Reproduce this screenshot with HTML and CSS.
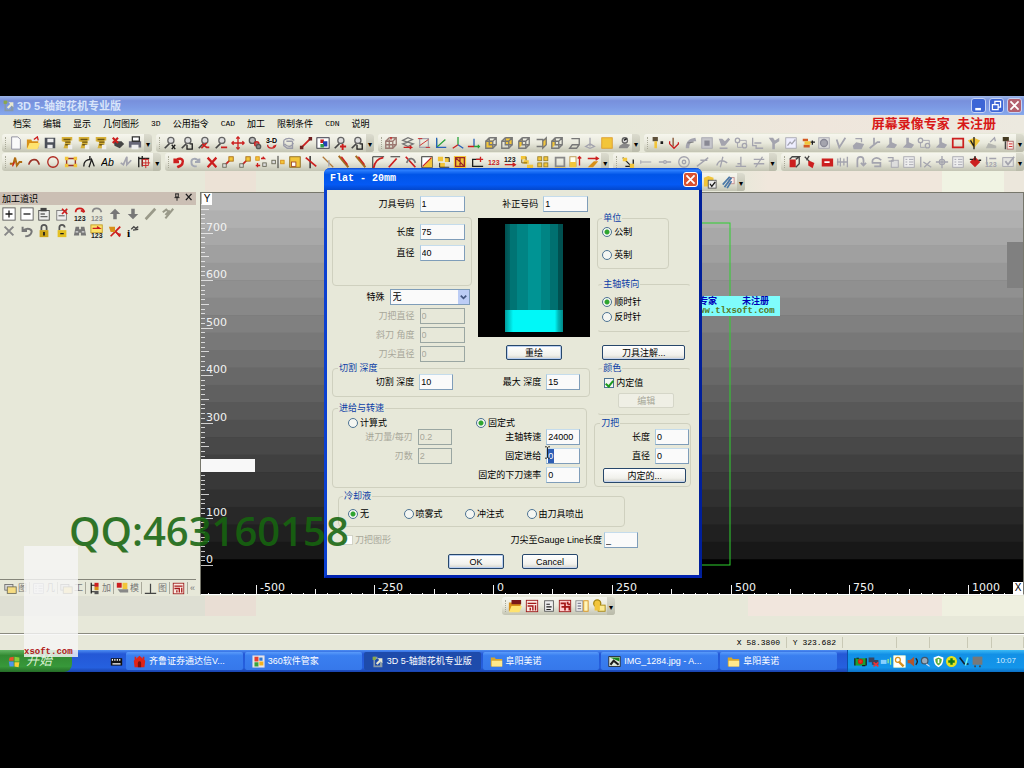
FILE: index.html
```html
<!DOCTYPE html>
<html lang="zh-CN">
<head>
<meta charset="utf-8">
<title>3D 5-轴鉋花机专业版</title>
<link rel="stylesheet" href="styles.css">
</head>
<body>
<main class="desktop">
  <header class="titlebar">
    <i data-icon="app"></i><h1>3D 5-轴鉋花机专业版</h1>
    <div class="winbtns">
      <button class="winbtn" aria-label="最小化"><i data-icon="min"></i></button>
      <button class="winbtn" aria-label="还原"><i data-icon="restore"></i></button>
      <button class="winbtn winbtn-close" aria-label="关闭"><i data-icon="close"></i></button>
    </div>
  </header>
  <nav class="menubar">
    <button>档案</button><button>编辑</button><button>显示</button><button>几何图形</button><button class="latin">3D</button><button>公用指令</button><button class="latin">CAD</button><button>加工</button><button>限制条件</button><button class="latin">CDN</button><button>说明</button>
    <strong class="notice">屏幕录像专家&nbsp; 未注册</strong>
  </nav>
  <div class="toolrow toolrow-1">
    <div class="bar" data-icons="new open save nc nc nc kill print"></div>
    <div class="bar" data-icons="zoomx zoombox zoomred zoomout pan balls rot3d spin diag image zoomin zoombox"></div>
    <div class="bar" data-icons="cube layers frame axes axes2 axes3 box1 box2 box3 box4 box3 box5 axisg yellow solid"></div>
    <div class="bar" data-icons="drill down surf shade cup glink gstep gflag gchart stack globe vee gmesh gpin gshoe gshoe glink gshoe redbox gem gslope calc"></div>
  </div>
  <div class="toolrow toolrow-2">
    <div class="bar" data-icons="wave arc circle rect node text gwave grid"></div>
    <div class="bar" data-icons="undo redo cross move1 move1 move2 mirror scale trim1 trim2 trim3 trim3 fillet fillet2 trim4 half group group2 corner n123a n123 chain four square raise offset"></div>
    <div class="bar" data-icons="snap gline gmid gcirc gtan gtan2 gperp gneq"></div>
    <div class="bar" data-icons="redcube redtool redslot gbars gloop gturn gcopy glist gx gcross glist diamond g123 gcheck"></div>
  </div>
  <div class="toolrow toolrow-3">
    <div class="bar bar-edit" data-icons="dbcheck attach"></div>
  </div>
  <div class="work">
    <aside class="side">
      <header class="side-head"><h2>加工道识</h2><button aria-label="固定"><i data-icon="pin"></i></button><button aria-label="关闭面板"><i data-icon="xsmall"></i></button></header>
      <div class="side-tools" data-icons="plus minus clip clipx r123 g123r up downg brush brush2 gdel gundo lock unlock bino y123 tools info"></div>
      <div class="side-tabs">
        <button><i data-icon="stackw"></i>图</button><button><i data-icon="glist"></i>几</button><button><i data-icon="stackw"></i>工</button><button><i data-icon="tree"></i>加</button><button><i data-icon="calc2"></i>模</button><button><i data-icon="perp"></i>图</button><button aria-label="宏"><i data-icon="maze"></i></button><button aria-label="更多">«</button>
      </div>
    </aside>
    <section class="view" id="view">
      <span class="axis axis-y">Y</span><span class="axis axis-x">X</span>
      <span class="patch"></span><span class="scrollpatch"></span>
      <p class="banner"><b>专家 &nbsp; &nbsp; &nbsp; &nbsp; &nbsp;未注册</b><span>ww.tlxsoft.com</span></p>
    </section>
  </div>
  <div class="lower"><div class="bar bar-lower" data-icons="openred maze doc maze2 table stacky"></div></div>
  <footer class="status"><span class="pos">X 58.3800</span><span class="pos">Y 323.682</span><span></span><span></span><span></span><span></span><span></span></footer>
  <footer class="taskbar">
    <button class="start"><i data-icon="windows"></i>开始</button>
    <div class="quick"><i data-icon="movie"></i></div>
    <div class="tasks">
      <button><i data-icon="house"></i>齐鲁证券通达信V...</button>
      <button><i data-icon="soft"></i>360软件管家</button>
      <button class="on"><i data-icon="app"></i>3D 5-轴鉋花机专业版</button>
      <button><i data-icon="folder"></i>阜阳美诺</button>
      <button><i data-icon="photo"></i>IMG_1284.jpg - A...</button>
      <button><i data-icon="folder"></i>阜阳美诺</button>
    </div>
    <div class="tray"><i data-icon="t1"></i><i data-icon="t2"></i><i data-icon="t3"></i><i data-icon="t4"></i><i data-icon="t5"></i><i data-icon="t6"></i><i data-icon="t7"></i><i data-icon="t8"></i><i data-icon="t9"></i><i data-icon="t10"></i><time>10:07</time></div>
  </footer>

  <section class="dialog" role="dialog" aria-labelledby="dlg-title">
    <header class="dialog-head"><h2 id="dlg-title">Flat - 20mm</h2><button class="winbtn dialog-close" aria-label="关闭"><i data-icon="close"></i></button></header>
    <form class="dialog-body">
      <div class="columns">
        <div class="left">
          <div class="top">
            <div class="stack">
              <div class="field"><label for="no">刀具号码</label><input id="no" value="1"></div>
              <fieldset class="plain stack">
                <div class="field"><label for="len">长度</label><input id="len" value="75"></div>
                <div class="field"><label for="dia">直径</label><input id="dia" value="40"></div>
              </fieldset>
              <div class="field field-select"><label for="sp">特殊</label><span class="select"><select id="sp"><option>无</option></select><i data-icon="chev"></i></span></div>
              <div class="field off"><label for="a1">刀把直径</label><input id="a1" value="0" disabled></div>
              <div class="field off"><label for="a2">斜刀 角度</label><input id="a2" value="0" disabled></div>
              <div class="field off"><label for="a3">刀尖直径</label><input id="a3" value="0" disabled></div>
            </div>
            <div class="preview-col">
              <div class="field field-comp"><label for="comp">补正号码</label><input id="comp" value="1"></div>
              <div class="preview"><div class="shank"></div><div class="blade"></div></div>
              <button type="button" class="btn btn-default">重绘</button>
            </div>
          </div>
          <fieldset class="depth">
            <legend>切割 深度</legend>
            <div class="pair">
              <div class="field"><label for="cut">切割 深度</label><input id="cut" value="10"></div>
              <div class="field"><label for="max">最大 深度</label><input id="max" value="15"></div>
            </div>
          </fieldset>
          <fieldset class="feed">
            <legend>进给与转速</legend>
            <div class="modes">
              <label class="opt"><input type="radio" name="mode">计算式</label>
              <label class="opt"><input type="radio" name="mode" checked>固定式</label>
            </div>
            <div class="pair">
              <div class="field off"><label for="f1">进刀量/每刃</label><input id="f1" value="0.2" disabled></div>
              <div class="field"><label for="f2">主轴转速</label><input id="f2" value="24000"></div>
              <div class="field off"><label for="f3">刃数</label><input id="f3" value="2" disabled></div>
              <div class="field"><label for="f4">固定进给</label><input id="f4" class="selected" value="0"></div>
              <span></span>
              <div class="field"><label for="f5">固定的下刀速率</label><input id="f5" value="0"></div>
            </div>
          </fieldset>
        </div>
        <div class="right">
          <fieldset class="unit"><legend>单位</legend>
            <label class="opt"><input type="radio" name="unit" checked>公制</label>
            <label class="opt"><input type="radio" name="unit">英制</label>
          </fieldset>
          <fieldset class="open spindle"><legend>主轴转向</legend>
            <label class="opt"><input type="radio" name="dir" checked>顺时针</label>
            <label class="opt"><input type="radio" name="dir">反时针</label>
          </fieldset>
          <button type="button" class="btn btn-note">刀具注解...</button>
          <fieldset class="open color"><legend>颜色</legend>
            <label class="opt"><input type="checkbox" checked>内定值</label>
            <button type="button" class="btn" disabled>编辑</button>
          </fieldset>
          <fieldset class="shaft"><legend>刀把</legend>
            <div class="field"><label for="s1">长度</label><input id="s1" value="0"></div>
            <div class="field"><label for="s2">直径</label><input id="s2" value="0"></div>
            <button type="button" class="btn">内定的...</button>
          </fieldset>
        </div>
      </div>
      <fieldset class="coolant"><legend>冷却液</legend>
        <label class="opt"><input type="radio" name="cool" checked>无</label>
        <label class="opt"><input type="radio" name="cool">喷雾式</label>
        <label class="opt"><input type="radio" name="cool">冲注式</label>
        <label class="opt"><input type="radio" name="cool">由刀具喷出</label>
      </fieldset>
      <div class="gauge">
        <label class="opt off"><input type="checkbox" disabled>刀把图形</label>
        <div class="field"><label for="g">刀尖至Gauge Line长度</label><input id="g" value="_"></div>
      </div>
      <div class="actions"><button type="button" class="btn btn-default">OK</button><button type="button" class="btn">Cancel</button></div>
    </form>
    <i class="ibeam" data-icon="ibeam"></i>
  </section>
  <div class="ghost"><span>xsoft.com</span></div>
  <p class="watermark">QQ:463160158</p>
</main>
<script src="script.js"></script>
</body>
</html>
```

FILE: styles.css
```css
* { box-sizing: border-box; }
body {
  margin: 0; min-height: 100vh; background: #000; color: #000;
  display: flex; align-items: center;
  font: 9px/12px "Liberation Sans", "Noto Sans CJK SC", sans-serif;
}
h1, h2, p { margin: 0; font-size: inherit; font-weight: inherit; }
button { font: inherit; color: inherit; background: none; border: 0; padding: 0; white-space: nowrap; }
i { display: inline-flex; flex: none; font-style: normal; }
i svg { display: block; width: 13px; height: 13px; }

.desktop { position: relative; width: 100%; height: 75vh; display: flex; flex-direction: column; background: #e7e8d9; overflow: hidden; }
.desktop > * { flex: none; }

.titlebar { height: 19px; display: flex; align-items: center; gap: 2px; padding: 0 2px; background: linear-gradient(#9db6e6, #7890dc 25%, #7c9ae4 60%, #86a8ec); color: #d8e4fa; }
.titlebar h1 { font-size: 11px; font-weight: bold; }
.winbtns { margin-left: auto; display: flex; gap: 3px; }
.winbtn { width: 15px; height: 15px; border: 1px solid #c5d3f5; border-radius: 3px; background: #3d66d6; display: flex; align-items: center; justify-content: center; }
.winbtn-close { background: #b3606f; }

.menubar { height: 18px; display: flex; align-items: center; gap: 12px; padding: 0 28px 0 13px; background: linear-gradient(90deg, #e7e8d9 60%, #efe6dc 80%, #ece9df); }
.menubar .latin { font-family: "Liberation Mono", monospace; font-size: 8px; }
.notice { margin-left: auto; color: #d81818; font-size: 13px; line-height: 18px; font-weight: 700; }

.toolrow { display: grid; gap: 4px; height: 19px; padding: 0 0 0 2px; align-items: center; }
.toolrow-1 { grid-template-columns: 150fr 218fr 262fr 380fr; }
.toolrow-2 { grid-template-columns: 159fr 443fr 163fr 243fr; }
.toolrow-3 { height: 21px; grid-template-columns: 1fr; background: linear-gradient(90deg, #e7e8d9 20%, #ece2d6 20% 25%, #e7e8d9 25% 72%, #f0e7dc 75% 92%, #f0f3e3 92% 98%, #ece7dc 98%); padding-left: 696px; }
.bar { height: 18px; display: flex; align-items: center; padding-left: 6px; border-radius: 3px; background: linear-gradient(#f6f6ee, #e9e9dc 50%, #c3c4b3); min-width: 0; overflow: hidden; }
.bar::before { content: ""; width: 1px; height: 12px; border-left: 1px dotted #a9a998; margin-left: -3px; }
.bar::after { content: "▾"; width: 8px; align-self: stretch; padding-top: 5px; background: linear-gradient(#dcdccf, #b9baa9); font: 8px/12px "DejaVu Sans", sans-serif; text-align: center; }
.bar button { flex: 1; min-width: 0; display: flex; justify-content: center; }
.bar button svg, .side-tools svg { width: 14px; height: 14px; }
.bar-edit { width: 49px; }
.bar-lower { width: 113px; }

.work { flex: 1 1 0; min-height: 0; display: flex; gap: 4px; }
.side { width: 196px; display: flex; flex-direction: column; }
.side-head { height: 13px; display: flex; align-items: center; gap: 2px; padding: 0 2px; background: #cbbfb4; }
.side-head h2 { flex: 1; }
.side-head i svg { width: 10px; height: 10px; }
.side-tools { padding: 0 19px 0 0; display: grid; grid-template-columns: repeat(10, 1fr); grid-auto-rows: 17px; }
.side-tools button { display: flex; align-items: center; justify-content: center; }
.side-tabs { margin-top: auto; height: 17px; display: flex; gap: 2px; padding-left: 4px; border-top: 1px solid #85857a; color: #777; }
.side-tabs button { display: flex; align-items: center; gap: 1px; padding-right: 2px; border-right: 1px solid #aaa99b; height: 12px; margin-top: 2px; }
.side-tabs button:last-child { border: 0; }

.view { position: relative; flex: 1; margin-bottom: 1px; border: 1px solid #77776c; border-bottom-color: #fff; overflow: hidden; background: #000; }
.view svg { display: block; width: 100%; height: 100%; }
.ruler { font: 11px "DejaVu Sans", sans-serif; fill: #f2f2f2; }
.axis { position: absolute; background: #fff; width: 10px; height: 12px; text-align: center; font-size: 10px; }
.axis-y { left: 1px; top: 0; }
.axis-x { right: 0; bottom: 0; }
.patch { position: absolute; left: 0; bottom: 122px; width: 54px; height: 13px; background: #f8f8f8; }
.scrollpatch { position: absolute; right: 0; top: 49px; width: 16px; height: 46px; background: #808080; }
.banner { position: absolute; left: 480px; top: 103px; width: 99px; padding-left: 18px; background: #7ffcfc; color: #0000b8; line-height: 10px; white-space: nowrap; }
.banner b, .banner span { display: block; }
.banner span { color: #557722; font: bold 9px/10px "Liberation Mono", monospace; }

.lower { height: 38px; padding: 1px 0 0 502px; border-bottom: 1px solid #8b8b80; background: linear-gradient(90deg, #dedfd3 20%, #e9ded4 20% 25%, #e7e8d9 25% 73%, #f1e6dd 73% 92%, #eff0e0 92%) 0 0 / 100% 20px no-repeat; }
.status { height: 16px; display: grid; grid-template-columns: 787fr 56fr 54fr 33fr 38fr 24fr 32fr; border-top: 1px solid #fff; align-items: center; font: 8px/12px "Liberation Mono", monospace; white-space: nowrap; }
.status span { border-right: 1px solid #c9c9b6; height: 11px; line-height: 11px; }
.status .pos { text-align: right; padding-right: 6px; }

.taskbar { height: 22px; display: flex; color: #fff; background: linear-gradient(#4d8df2, #2458d6 18%, #2560df 80%, #1a43ac); }
.start { width: 72px; display: flex; align-items: center; gap: 5px; padding-left: 8px; border-radius: 0 8px 8px 0; background: linear-gradient(#63b563, #328a32 25%, #37983a 75%, #246a26); font-size: 13px; font-style: italic; color: #d6f0cf; }
.quick { width: 54px; display: flex; align-items: center; justify-content: flex-end; padding-right: 3px; }
.tasks { flex: 1; display: grid; grid-template-columns: repeat(6, 1fr); gap: 2px; padding: 2px 10px 2px 0; }
.tasks button { display: flex; align-items: center; gap: 3px; padding-left: 7px; border-radius: 2px; overflow: hidden; background: linear-gradient(#5a9bfa, #3a7ff0 20%, #3678ea); }
.tasks .on { background: #1e4bab; }
.tray { width: 177px; display: flex; align-items: center; padding: 0 8px 0 6px; background: linear-gradient(#3bb9f5, #1290e6 20%, #1395ea 80%, #0c6fc4); border-left: 1px solid #0b4fa8; }
.tray time { margin-left: auto; font-size: 8px; color: #d6ecff; }

.dialog { position: absolute; left: 324px; top: 72px; width: 378px; border: solid #0a3fd0; border-width: 0 3px 3px; border-right-color: #001f9a; border-bottom-color: #0022b0; border-radius: 6px 6px 0 0; background: #e7e8d9; }
.dialog-head { height: 22px; margin: 0 -3px; display: flex; align-items: center; justify-content: space-between; padding: 0 4px 0 6px; border-radius: 6px 6px 0 0; background: linear-gradient(#0a44cc, #2c80ff 10%, #0055e8 30%, #0459f4 75%, #0347cc); color: #fff; }
.dialog-head h2 { font: bold 10px/14px "Liberation Mono", monospace; }
.dialog-close { background: #d9512f; border-color: #fff; }
.dialog-body { padding: 6px 8px 6px 5px; }
.columns { display: flex; gap: 4px; }
.left { flex: 259; min-width: 0; }
.right { flex: 97; min-width: 0; padding-top: 16px; }
.top { display: grid; grid-template-columns: 140fr 113fr; gap: 6px; }
.stack { display: flex; flex-direction: column; gap: 3px; }

.field { display: flex; align-items: center; justify-content: flex-end; gap: 5px; height: 16px; padding-right: 7px; white-space: nowrap; }
.field input { width: 45px; height: 16px; padding: 0 1px; border: 1px solid #7f9db9; border-top-color: #c5dcec; border-left-color: #a9c8dd; background: #fafafa; font: inherit; color: #000; outline: 0; }
.off, .field input:disabled { color: #a7a799; }
.field input:disabled { background: #e7e8d9; border-color: #9aa6a2; }
.field .selected { background: linear-gradient(90deg, #fafafa 1px, #2d5eb5 1px 7px, #fafafa 7px); color: #fff; }
fieldset { margin: 0; min-width: 0; border: 1px solid #cfd0bf; border-radius: 4px; padding: 0; }
legend { margin-left: 5px; padding: 0 1px; color: #0b3da6; line-height: 12px; }
.plain { gap: 5px; padding: 6px 0 24px; margin: 2px 0 0; }
.plain .field { padding-right: 6px; }
.field-select { padding-right: 2px; }
.select { position: relative; width: 80px; height: 16px; }
.select select { appearance: none; width: 100%; height: 16px; border: 1px solid #7f9db9; background: #fafafa; font: inherit; color: #000; padding: 0 2px; display: block; }
.select i { position: absolute; right: 1px; top: 1px; background: #bccdf5; pointer-events: none; }
.select i svg { width: 11px; height: 14px; }
.preview-col { display: flex; flex-direction: column; align-items: center; }
.field-comp { align-self: stretch; padding-right: 2px; }
.preview { width: 100%; height: 119px; margin: 6px 0 8px; padding: 6px 27px 5px; background: #000; display: flex; flex-direction: column; }
.shank { flex: 1; background: linear-gradient(90deg, #005050, #006060 8%, #007474 8% 20%, #008484 20% 40%, #009494 40% 62%, #008484 62% 78%, #007070 78% 92%, #005050 92%); }
.blade { height: 22px; background: linear-gradient(90deg, #009c9c, #00d0d0 8%, #00f8f8 14% 86%, #00b8b8 92%, #008888); }

.btn { height: 15px; width: 56px; border: 1px solid #27476b; border-radius: 2px; background: linear-gradient(#fff, #f1f1ec 70%, #d3d2ca); box-shadow: inset 0 -1px #c5d4ee; line-height: 12px; }
.btn-default { box-shadow: inset 0 0 0 1px #b9cff1; }
.btn:disabled { color: #a7a799; border-color: #d5d6c8; background: #efefe5; box-shadow: none; }
.pair { display: grid; grid-template-columns: 127fr 131fr; row-gap: 3px; }
.pair .field input { width: 34px; }
.pair .field { padding-right: 6px; }
.depth { padding-bottom: 6px; }
.depth .field:last-child { padding-right: 9px; }
.feed { margin: 5px 3px 0 0; padding: 3px 0 4px; }
.modes { display: grid; grid-template-columns: 128px 1fr; padding-left: 15px; }
.opt { display: flex; align-items: center; gap: 2px; height: 12px; white-space: nowrap; }
.opt input { appearance: none; flex: none; width: 10px; height: 10px; margin: 0; border: 1px solid #4d7393; border-radius: 50%; background: #f4f6f2; }
.opt input[type="checkbox"] { border-radius: 0; display: flex; justify-content: center; }
.opt input[type="radio"]:checked { background: radial-gradient(circle, #2fa52f 2px, #f4f6f2 3px); }
.opt input[type="checkbox"]:checked::after { content: ""; width: 3px; height: 6px; border: solid #1d9a1d; border-width: 0 2px 2px 0; transform: rotate(40deg); }
.opt input:disabled { border-color: #d3d4c7; background: #fff; }
.right fieldset { display: block; padding-left: 7px; margin-left: 3px; }
.right legend { margin-left: 0; }
.right .unit { width: 72px; padding: 2px 0 7px 4px; }
.unit .opt + .opt { margin-top: 11px; }
.right .open { border-left-color: transparent; border-right-color: transparent; padding-left: 4px; margin-top: 9px; }
.spindle { padding: 6px 0 8px; }
.spindle .opt + .opt { margin-top: 3px; }
.btn-note { display: block; width: 83px; margin: 13px 0 0 8px; }
.right .color { margin-top: 2px; padding: 3px 0 6px 6px; }
.color legend { margin-left: -2px; }
.color .btn { display: block; margin: 4px 0 0 14px; }
.right .shaft { margin: 2px 0 0; padding: 0 0 3px 5px; }
.shaft .field { padding-right: 1px; margin-bottom: 3px; }
.shaft .field input { width: 34px; }
.shaft .btn { width: 83px; display: block; margin: 4px 0 0 3px; }
.coolant { margin: 2px 66px 0 6px; padding: 6px 0 6px 9px; }
.coolant legend { margin-left: -5px; }
.coolant .opt { display: inline-flex; margin-right: 20px; vertical-align: top; }
.coolant .opt:last-child { margin-right: 0; }
.coolant .opt:first-of-type { margin-right: 32px; }
.gauge { margin-top: 5px; display: flex; align-items: center; justify-content: space-between; padding: 0 46px 0 11px; }
.gauge .field { gap: 2px; }
.gauge .field input { width: 34px; }
.actions { margin: 6px 0 0; display: flex; gap: 18px; padding-left: 116px; }
.ibeam { position: absolute; left: 214px; top: 278px; }

.ghost { position: absolute; left: 24px; bottom: 15px; width: 54px; height: 111px; background: rgba(245, 245, 245, .82); display: flex; align-items: flex-end; color: #b01818; font: bold 9px/10px "Liberation Mono", monospace; }
.watermark { position: absolute; left: 69px; bottom: 117px; color: #16650f; opacity: .88; font: 600 40px/48px "Open Sans", sans-serif; }
```

FILE: script.js
```js
const s = (c, d, w = 1.5) => `<path fill="none" stroke="${c}" stroke-width="${w}" d="${d}"/>`;
const f = (c, d) => `<path fill="${c}" d="${d}"/>`;
const o = (c, x, y, r, fill = 'none') => `<circle cx="${x}" cy="${y}" r="${r}" fill="${fill}" stroke="${c}" stroke-width="1.5"/>`;
const box = (x, y, w, h, fill, c = '#444') => `<rect x="${x}" y="${y}" width="${w}" height="${h}" fill="${fill}" stroke="${c}"/>`;
const num = (c, y = 14) => `<text x="1" y="${y}" font-family="Liberation Sans" font-weight="bold" font-size="8" fill="${c}">123</text>`;
const G = '#a4a4ae', D = '#444', R = '#cc1f1f', Y = '#f2c53a', B = '#1c1c1c', O = '#d89018';
const lens = s(D, 'M8 8l-6 6', 2) + o('#666', 9, 5, 3.5, '#ddd');
const cube = s('#777', 'M2 6h8v8H2zM6 2h8v8h-4M2 6l4-4M10 6l4-4M10 14l4-4M6 2v8h4');
const sheet = f('#fafafa', 'M3 1h7l3 3v11H3z') + s('#889', 'M3 1h7l3 3v11H3z', 1);

const icons = {
  app: f('#889aa8', 'M3 2h5v3H5v8h6V8h3v7H3z') + f('#e8e8d0', 'M8 4h6v6l-2-2-4 4-2-2 4-4z') + f('#8ba84a', 'M2 2h4v4H2z'),
  min: f('#fff', 'M4 11h7v3H4z'),
  restore: s('#fff', 'M3 7h7v6H3zM6 6V3h7v7h-3'),
  close: s('#fff', 'M3 3l10 10M13 3L3 13', 2.2),
  new: sheet,
  open: f(O, 'M1 4h5l1 2h7v8H1z') + f('#ffe36e', 'M4 8h12l-3 7H1z') + s(R, 'M9 4l4-3 1 4'),
  save: f('#4b4f58', 'M2 2h12v12H2z') + f('#eee', 'M5 3h7v4H5zM5 10h6v4H5z'),
  nc: f('#d8b23a', 'M2 1h12v4h-2v9H4l2-7-4-1z') + s('#6b5410', 'M4 4h8M6 7h6M6 10h5') + f('#eee', 'M9 10h5v5H9z'),
  kill: f('#444', 'M3 6h9l3 3-5 5-6-3z') + s(R, 'M2 2l6 6M8 2L2 8', 2.5),
  print: f('#fff', 'M5 1h8v6H5z') + f('#667', 'M1 6h14v7H1z') + f('#eee', 'M4 10h8v5H4z') + s('#333', 'M5 1h8v5H5z'),
  zoomx: lens + s(B, 'M10 10l4 5M14 10l-4 5'),
  zoombox: lens + s(B, 'M8 10v5h6V9h-3'),
  zoomred: lens + s(R, 'M6 9l5 4h3M11 8l-6 6', 2),
  zoomout: lens + s(R, 'M8 13h7', 2.2),
  zoomin: lens + s(R, 'M8 12h7M11 9v7', 2.2),
  pan: s(R, 'M8 1v14M1 8h14M6 3l2-2 2 2M6 13l2 2 2-2M3 6L1 8l2 2M13 6l2 2-2 2'),
  balls: o('#555', 5, 5, 3.5, '#bbb') + o(R, 10, 9, 2.5, '#a66') + o('#555', 12, 12, 2.5, '#888'),
  rot3d: `<text x="1" y="8" font-family="Liberation Sans" font-weight="bold" font-size="8">3-D</text>` + s(R, 'M3 10c0 5 8 5 9 1l-3 1'),
  spin: s('#999aa8', 'M2 5c3-3 9-3 12 0M3 9c3 4 8 4 10-1M2 5v6l4 3h6V6M5 6h7'),
  diag: s(R, 'M3 13L13 3', 2) + f('#702020', 'M1 11h4v4H1zM11 1h4v4h-4z'),
  image: box(1, 2, 14, 12, '#fff', '#223') + f(R, 'M5 4h4v4H5z') + f('#2343b3', 'M8 6h5v6H8z') + f('#2e9b4a', 'M5 9h4v4H5z'),
  cube: s('#9a7770', 'M2 6h8v8H2zM6 2h8v8l-4 4M2 6l4-4M10 6l4-4M2 10h12M6 4v10') + s(R, 'M8 1v3'),
  layers: s('#777', 'M2 5l6-3 5 2-6 3zM2 9l6-2 6 2-6 3z') + s(R, 'M3 13h9l-2-2M12 13l-2 2'),
  frame: s(G, 'M3 3h10v10H3z') + s(R, 'M1 3h5M10 13h5M3 11l10-7', 1),
  axes: s('#2aa23a', 'M3 13V3M3 13L13 4') + s('#2860b8', 'M3 2v11h11'),
  axes2: s('#2aa23a', 'M8 10V1') + s(R, 'M8 10l-6 4') + s('#2860b8', 'M8 10l6 4'),
  axes3: s('#2860b8', 'M8 12V3') + s(R, 'M8 12H1') + s('#2aa23a', 'M8 12h7M13 10v4'),
  box1: f(Y, 'M2 5h8v9H2z') + cube, box2: f(Y, 'M6 2h8v8H6z') + cube, box3: f(Y, 'M2 6l4-4v8l-4 4z') + cube,
  box4: f(Y, 'M10 6l4-4v8l-4 4z') + s('#777', 'M3 4h7v8H3M10 6l4-4v8l-4 4z'), box5: s('#777', 'M5 3h9v7l-3 4H3l3-4h8'),
  axisg: s(G, 'M8 2v10M3 12l5-3 5 3-5 2z'), yellow: box(2, 2, 12, 12, Y, '#dd9c28'),
  solid: f('#888', 'M3 11l5-3 7 2-3 4H2z') + o('#666', 9, 5, 3, '#ddd') + s(B, 'M8 5l3-2'),
  drill: f('#5e503a', 'M3 1h6v5H3z') + f(Y, 'M5 6h3v8H5z') + f(B, 'M12 6h3v3h-3z'),
  down: s('#805030', 'M7 2v10') + s(R, 'M3 9l5 5 5-5v-2M3 9V6'),
  surf: f(G, 'M2 14c0-8 4-11 11-12l1 4C8 6 6 9 6 14z') + s('#777', 'M4 8l7-1', 1),
  shade: box(2, 2, 12, 12, '#c6c6cb', G) + f('#898994', 'M5 5h6v6H5z'), cup: f(G, 'M2 3h4l3 3 4-4 2 2-6 7H5z') + s(G, 'M3 14h9'),
  glink: o(G, 4, 5, 2.5) + o(G, 12, 11, 2.5) + s(G, 'M4 8v5h5M7 5h7v4', 1), gstep: s(G, 'M3 2v9h4v3h8M5 8h8'), gflag: f(G, 'M2 2h5l2 3 5-3v4l-5 3v6H6V8z'),
  gchart: box(2, 2, 12, 12, '#eef', G) + s(G, 'M4 11l3-4 2 2 4-5'), stack: f('#d45a22', 'M2 3h6v3H2zM3 10h7v3H3z') + f(Y, 'M4 6h7v4H4z') + s(B, 'M11 7h5M13 5v5'),
  globe: box(2, 2, 12, 12, '#ddd', G) + o('#888896', 8, 8, 4, G), vee: s(G, 'M3 4l3 9 7-11', 2),
  gmesh: f(G, 'M2 11l4-4 9 2-3 6H3z') + s(G, 'M5 3h7v4'), gpin: s(G, 'M8 2v8M3 14l5-4 4-3h3', 2), gshoe: f(G, 'M6 2h3v5l6 3-3 4-10-1 4-4z'),
  redbox: s(R, 'M2 3h12v10H2z', 2), gem: f(Y, 'M1 5l7-3 7 3-7 9z') + s(B, 'M8 1v14M4 5l4 7'), gslope: f('#b4b5b0', 'M2 14h12v-3L5 8z') + s(G, 'M7 7l5-5 1 4'),
  calc: f('#443a22', 'M2 1h7v5H2z') + box(7, 6, 7, 9, '#fbe7e2', '#a66') + s(R, 'M9 9h4M9 12h4', 1) + s(D, 'M5 6v9'),
  wave: s('#b06a10', 'M1 10h4l2-7 2 9 3-4h3', 2.2) + s(R, 'M4 13l2-5'),
  arc: s('#9a3328', 'M2 11c2-7 10-8 12 0', 2), circle: o('#b02a22', 8, 8, 6), rect: s('#9a3328', 'M3 4h10v8H3z', 1.6) + f(Y, 'M1 2h4v4H1zM11 2h4v4h-4zM1 10h4v4H1zM11 10h4v4h-4z'),
  node: s(B, 'M2 13c0-6 4-8 8-8M9 1v5M8 14l3-9 3 8'), text: `<text x="0" y="12" font-family="Liberation Sans" font-size="12" font-style="italic">Ab</text>`,
  gwave: s(G, 'M2 9l3 2 4-9v9l5-5', 2), grid: s(B, 'M2 2v12M2 4h12M6 1v12') + s(R, 'M6 5h7v7H6zM10 4v11M6 9h9', 1),
  undo: s(R, 'M3 4v4h5M3 8c4-6 11-4 9 1 0 3-4 4-6 5', 2.8), redo: s('#a4a8b4', 'M13 4v4H8M13 8C9 2 3 4 4 9c0 3 3 4 6 4', 2.2), cross: s(R, 'M3 3l10 11M13 3L3 14', 2.6),
  move1: s(R, 'M5 11l5-5', 2) + box(9, 2, 5, 5, Y, '#a66a10') + box(2, 10, 4, 4, '#ddd', '#665'), move2: box(2, 2, 4, 4, Y, O) + box(10, 9, 4, 4, '#ddd', '#665') + s(R, 'M8 4h4l-2-2M4 9v5M2 12h5'),
  mirror: s(B, 'M8 1v14', 1) + box(1, 6, 4, 4, '#ddd', '#665') + box(11, 6, 4, 4, Y, O), scale: box(2, 2, 12, 12, Y, '#8a671a') + box(4, 8, 5, 5, '#fff', '#a04828'),
  trim1: s(B, 'M7 1v14') + s(R, 'M2 3l12 10', 2), trim2: s('#b07838', 'M2 2l12 12', 1.5) + s(G, 'M9 6v7'), trim3: s('#a66b20', 'M2 1l11 13', 2.4) + s(R, 'M5 2l7 9'),
  fillet: s(B, 'M2 15V2h13', 1) + s(R, 'M3 15C4 8 8 4 14 3', 2), fillet2: s(B, 'M4 2h11', 1) + s(R, 'M2 14l9-10', 2), trim4: s(R, 'M2 2l11 12', 2) + s('#777', 'M3 9c3-7 8-6 10 0', 2),
  half: box(2, 2, 12, 12, '#fff', B) + f(Y, 'M14 2v12H3z') + s(R, 'M3 13L13 3'), group: f(Y, 'M1 2h6v5H1zM9 3h5v5H9zM3 9h6v5H3z') + s(B, 'M9 3h5v5M3 9v5h11', 1),
  group2: f(Y, 'M1 1h14v14H1z') + s('#9a2626', 'M3 3h10v10H3zM3 3l10 10M8 3v9'), corner: s(B, 'M12 5H3v8h12') + s(R, 'M7 5h8M12 2v6'),
  n123a: num(R, 11), n123: num(B, 8) + s(R, 'M2 11h12M11 9l3 2-3 2'), chain: f(Y, 'M1 1h6v4H1zM4 6h6v4H4zM8 11h7v4H8z') + s('#775500', 'M2 5v4h6M7 6V2', 1),
  four: box(2, 2, 4.5, 4.5, Y, '#9b802a') + box(9, 2, 4.5, 4.5, Y, '#9b802a') + box(2, 9, 4.5, 4.5, Y, '#9b802a') + box(9, 9, 4.5, 4.5, Y, '#9b802a'),
  square: s('#888', 'M3 3h10v10H3z', 2) + s(Y, 'M2 15h13'), raise: box(1, 2, 7, 11, '#ffe', '#b8924a') + f(Y, 'M1 8h7v6H1z') + s(R, 'M12 12V2M10 4l2-2 2 2'), offset: s(R, 'M2 4h12M11 2l3 2-3 2') + f(O, 'M9 7h5l-6 7H2z'),
  snap: s(B, 'M2 3l10 10M14 5v8H5') + f(Y, 'M2 3h5v4H2zM10 10h5v5h-5z'), gline: s(G, 'M2 8h12M2 6v4', 1.2), gmid: s(G, 'M1 8h14') + o(G, 8, 8, 1.5, '#eee'), gcirc: o(G, 8, 8, 6) + o(G, 8, 8, 2),
  gtan: s(G, 'M1 13L14 3M5 6h8'), gtan2: s(G, 'M2 12c2-6 6-7 12-3M9 2L6 14'), gperp: s(G, 'M3 13h12M9 2v11M5 10h4'), gneq: s(G, 'M2 5h12M2 10h12M4 14l8-12'),
  redcube: f(R, 'M3 5h7v9H3z') + s(D, 'M3 5l3-3h8l-4 3M14 2v8l-4 4'), redtool: f(R, 'M6 6l7 3-2 6-5-3z') + s(D, 'M2 2l5 5M7 1L4 6'), redslot: f(R, 'M2 4h13v9H2z') + s('#fff', 'M5 8h6', 2),
  gbars: s(G, 'M2 4v8M5 3v10M9 4v8M13 2v12M1 8h12'), gloop: s(G, 'M5 14V6c0-5 7-5 7 0v5M9 9l3 3 3-3', 2), gturn: s(G, 'M14 6C9 1 3 4 4 9h9v4H6', 2), gcopy: box(6, 6, 8, 8, '#ddd', G) + s(G, 'M2 3h6v4H3'),
  glist: box(2, 2, 12, 12, '#eee', G) + s(G, 'M4 5h2M8 5h5M4 8h2M8 8h5M4 11h2M8 11h5', 1), gx: s(G, 'M2 2v12M5 8l9 6M13 7L6 14'), gcross: s(G, 'M8 1v14M1 8h14') + o(G, 8, 8, 3),
  diamond: f(R, 'M8 2l6 6-6 6-6-6z') + s(B, 'M2 5h4M8 1v5M12 6h3'), g123: s(G, 'M3 2v9M6 4h8') + num(G), gcheck: box(2, 3, 12, 10, '#e4e4e0', G) + s(G, 'M5 7l3 4 7-9', 2),
  dbcheck: f(Y, 'M1 3l5-2 6 2v10H1z') + box(6, 6, 9, 9, '#eee', '#555') + s(B, 'M8 10l2 3 4-5'), attach: box(9, 3, 6, 7, '#fee', '#b88') + s('#4a79a8', 'M4 14l8-11M2 11l8-9M7 15l5-8', 2),
  pin: s(B, 'M5 3h6M6 3v5h4V3M4 9h8M8 9v5'), xsmall: s(B, 'M3 3l9 10M12 3L3 13', 2.2),
  plus: box(1, 1, 14, 14, '#fff', '#555') + s(B, 'M4 8h8M8 4v8'), minus: box(1, 1, 14, 14, '#fff', '#555') + s(B, 'M4 8h8'),
  clip: box(2, 4, 12, 11, '#eee', '#444') + f('#444', 'M4 1h7v4H4z') + s('#666', 'M4 8h5M4 11h8'), clipx: box(2, 4, 11, 11, '#eee', '#777') + s(R, 'M8 2l6 6M14 2L8 8', 2) + s('#777', 'M4 10h7'),
  r123: s(R, 'M3 6c0-6 9-6 10 0M13 6l-4-2', 2) + num(B, 16), g123r: s('#888', 'M3 6c0-6 9-6 10 0', 2) + num('#888', 16),
  up: f('#777', 'M8 2l6 6h-4v6H6V8H2z'), downg: f('#777', 'M8 14l6-6h-4V2H6v6H2z'), brush: s('#999989', 'M3 14L14 2', 3), brush2: s('#999989', 'M5 13L14 2M2 6l4-3 4 4M5 9l5-5', 2.3),
  gdel: s('#888', 'M3 3l10 10M13 3L3 13', 2.3), gundo: s('#777', 'M3 3v5h5M3 8c5-5 12-2 10 2-1 3-4 4-7 4', 2.3),
  lock: s('#555', 'M5 7V4c0-4 6-4 6 0v3', 2) + f('#cda51a', 'M3 7h10v8H3z') + f(B, 'M7 9h2v4H7z'), unlock: s('#555', 'M5 7V4c0-4 6-4 6 0', 2) + f('#e4c022', 'M3 7h10v8H3z') + s(B, 'M6 11h4'),
  bino: f('#777', 'M3 3h4v3h2V3h4l2 10H9v-3H7v3H1z') + s('#ddd', 'M3 9h3M10 9h3'), y123: box(1, 1, 13, 9, '#fce16a', '#c09a20') + s(R, 'M3 5h8L8 3') + num(B, 16),
  tools: s(R, 'M3 14L14 3M9 9l5 5', 2) + f(O, 'M1 3h7v6H3z') + f(R, 'M9 10l6 1-2 4z'), info: `<text x="1" y="15" font-family="Liberation Serif" font-weight="bold" font-size="13">i</text>` + s('#444', 'M6 6l3-3 2 2 3-2M8 7l6-1'),
  stackw: box(1, 3, 10, 7, '#ddd', '#666') + box(4, 6, 11, 8, '#f6dc82', '#665'), tree: s(B, 'M4 1v13M4 4h5M4 12h5') + f(R, 'M8 1h5v5H8z') + f(O, 'M8 6h5v4H8z') + f('#555', 'M8 11h5v4H8z'),
  calc2: f(R, 'M1 1h6v6H1z') + f(Y, 'M8 1h6v8H8z') + f('#888', 'M2 9h13v4H5z'), perp: s('#444', 'M8 2v12M1 14h14'),
  maze: box(1.5, 1.5, 13, 13, '#fae8e0', '#9b1616') + s('#a51818', 'M3 5h10M3 8h6v5M6 13V10M12 7v6', 1.6), maze2: box(1.5, 1.5, 13, 13, '#fcc', '#9b1616') + s('#a51818', 'M3 5h5v8M11 3v3M4 9h9v4M11 6h3', 2),
  openred: f(O, 'M1 4h14l-2 10H1z') + f('#7c1818', 'M4 1h11v5H4z') + f('#ffe36e', 'M4 8h12l-3 7H1z'), doc: box(3, 2, 10, 12, '#eee', '#555') + s(B, 'M5 6h4M5 9h6M5 12h5', 1.3),
  table: box(1, 2, 8, 12, '#eee', '#888') + s('#889', 'M3 5h4M3 8h4M3 11h4') + box(10, 2, 5, 12, '#fff5ba', O), stacky: o('#a5850e', 6, 5, 4, Y) + box(7, 7, 8, 7, '#fbe992', '#a5850e') + f(Y, 'M3 5h6v8H3z'),
  windows: f('#e9532c', 'M2 3l5-1v5H1z') + f('#88cc38', 'M8 2l6 1v5H8z') + f('#4f94ec', 'M1 8h6v6H2z') + f('#fbcf36', 'M8 9h6l-1 6-5-1z'),
  movie: f('#111', 'M1 4h14v9H1z') + s('#fff', 'M3 5v2M6 5v2M9 5v2M12 5v2M3 11h10'),
  house: f('#e02418', 'M8 1l7 6-1 8H2L1 7z') + f('#7c1010', 'M6 10c0-3 4-3 4 0v5H6z') + s('#e02418', 'M3 2v6M13 2v6', 2),
  soft: box(1, 1, 14, 14, '#eee', '#ccd') + f('#e5402e', 'M3 2h5v6H3z') + f('#f4b21e', 'M9 8h5v5H9z') + f('#3aa340', 'M3 9h5v5H3z') + f('#3077d0', 'M9 3h4v4H9z'),
  folder: f('#d7a62c', 'M1 3h5l1 2h8v9H1z') + f('#ffe98c', 'M2 7h13v7H2z'), photo: box(1, 2, 14, 12, '#dfeadf', B) + f('#18851e', 'M2 3h12v5L7 5z') + s(B, 'M3 12l4-5 6 5', 2.5),
  chev: s('#42557f', 'M4 6l4 4 4-4', 2.4), ibeam: s(B, 'M5 1h2l1 1 1-1h2M8 2v12M5 15h2l1-1 1 1h2', 1.2),
  t1: f('#18a034', 'M1 4h14v9H1z') + s(B, 'M1 4v9M15 4v9M3 4h3M10 13h4') + o('#c21', 8, 8, 2.5, '#e32'), t2: f('#38445e', 'M2 3h7v6H2zM6 6h8v6H6z') + s('#e33', 'M8 9l6 5M14 9l-6 5', 2),
  t3: f('#87d0ff', 'M1 6h7v5H1z') + s('#9bf58c', 'M10 5v5M13 3v9'), t4: box(1, 1, 14, 14, '#fff', '#ffc') + s(O, 'M7 8l6 6', 3) + o(O, 6, 6, 3), t5: f('#b3552f', 'M2 6h3l5-4v12l-5-4H2z') + s('#222', 'M12 4c3 3 2 6 0 8'),
  t6: o('#456', 7, 7, 4, '#9ab') + s('#dde', 'M9 11l4 3'), t7: f('#fff', 'M8 1l6 2c0 7-2 10-6 12C4 13 2 10 2 3z') + f('#58ad38', 'M8 3l4 2c0 4-1 6-4 8-3-2-4-4-4-8z') + f('#fff', 'M7 5h2v5H7z'),
  t8: o('#e8e21c', 8, 8, 6, '#e8e21c') + s('#147a1c', 'M8 4v8M4 8h8', 3), t9: s('#123', 'M2 3l6 8h5', 2) + s('#6ff2ea', 'M12 3l-3 10', 2), t10: f('#787878', 'M2 2h12v10H2z') + s('#444', 'M4 14h2M10 14h2', 2)
};

const draw = name => `<svg viewBox="0 0 16 16" aria-hidden="true">${icons[name]}</svg>`;
document.querySelectorAll('[data-icon]').forEach(el => { el.innerHTML = draw(el.dataset.icon); });
document.querySelectorAll('[data-icons]').forEach(bar => {
  bar.innerHTML = bar.dataset.icons.split(' ').map(n => `<button type="button" aria-label="${n}"><i>${draw(n)}</i></button>`).join('');
});

// Drawing area: banded backdrop, work rectangle and both rulers, measured from the lower left corner.
const SCALE = 0.475, X0 = 292, Y0 = -29;
let art = '';
for (let i = 0; i < 23; i++) {
  const v = Math.max(0, 184 - 8 * i - (i > 20 ? 20 : 0));
  art += `<rect y="${i * 4.35}%" width="100%" height="4.5%" fill="rgb(${v},${v},${v})"/>`;
}
let marks = `<rect x="${X0}" y="${Y0 - 342}" width="237" height="342" fill="none" stroke="#2fd02f"/>`;
for (let v = 0; v <= 760; v += 10) {
  const y = Math.round(Y0 - v * SCALE), w = v % 100 === 0 ? 12 : v % 50 === 0 ? 8 : 4;
  marks += `<rect x="0" y="${y}" width="${w}" height="1" opacity=".8"/>`;
  if (v % 100 === 0 && v !== 200) marks += `<text x="5" y="${y - 2}">${v}</text>`;
}
for (let v = -600; v <= 1075; v += 25) {
  const x = Math.round(X0 + v * SCALE), h = v % 250 === 0 ? 9 : v % 125 === 0 ? 5 : 1;
  marks += `<rect x="${x}" y="${-h}" width="1" height="${h}"/>`;
  if (v % 250 === 0) marks += `<text x="${x + 4}" y="-3">${v}</text>`;
}
document.getElementById('view').insertAdjacentHTML('afterbegin', `<svg>${art}<svg class="ruler" y="100%" overflow="visible">${marks}</svg></svg>`);
```
